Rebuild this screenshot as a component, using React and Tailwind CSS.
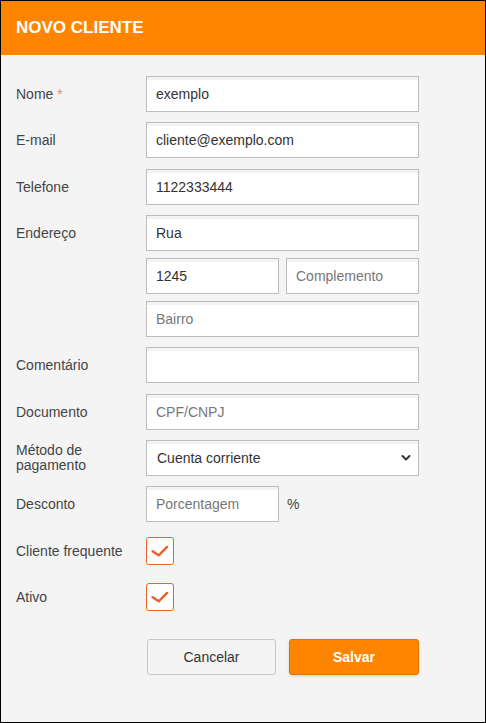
import React, { useState } from "react";

const inputBase =
  "h-[36px] border border-[#bdbdbd] bg-white px-[9px] text-[14px] text-[#333] placeholder:text-[#777] shadow-[inset_0_3px_0_#f3f3f3] outline-none";
const inputCls = `${inputBase} w-full min-w-0`;

const Row = ({ label, required, className = "", children }) => (
  <div className={`flex items-start ${className}`}>
    <div className="flex h-[36px] w-[130px] shrink-0 items-center text-[14px] leading-[15px] text-[#444]">
      <span>
        {label}
        {required && <span className="text-[#f08a4b]"> *</span>}
      </span>
    </div>
    <div className="w-[273px]">{children}</div>
  </div>
);

const Check = ({ checked, onChange }) => (
  <button
    type="button"
    onClick={onChange}
    className="flex h-[28px] w-[28px] items-center justify-center rounded-[3px] border border-[#e8622a] bg-white"
  >
    {checked && (
      <svg width="28" height="28" viewBox="0 0 28 28" fill="none">
        <path
          d="M6 14.2 L12.6 18.6 L21.6 9.6"
          stroke="#e8622a"
          strokeWidth="2.6"
          strokeLinecap="round"
          strokeLinejoin="round"
        />
      </svg>
    )}
  </button>
);

const App = () => {
  const [frequente, setFrequente] = useState(true);
  const [ativo, setAtivo] = useState(true);

  return (
    <div className="h-[723px] w-[486px] border border-black bg-[#f4f4f4] [font-family:'Liberation_Sans',Arial,sans-serif]">
      <div className="flex h-[54px] items-center bg-[#ff8400] px-[15px] text-[17px] font-bold text-white">
        NOVO CLIENTE
      </div>

      <form className="flex flex-col pl-[15px] pt-[21px]">
        <Row label="Nome" required>
          <input className={inputCls} defaultValue="exemplo" />
        </Row>
        <Row label="E-mail" className="mt-[10px]">
          <input className={inputCls} defaultValue="cliente@exemplo.com" />
        </Row>
        <Row label="Telefone" className="mt-[11px]">
          <input className={inputCls} defaultValue="1122333444" />
        </Row>
        <Row label="Endereço" className="mt-[10px]">
          <input className={inputCls} defaultValue="Rua" />
          <div className="mt-[7px] flex gap-[7px]">
            <input className={inputCls} defaultValue="1245" />
            <input className={inputCls} placeholder="Complemento" />
          </div>
          <input className={`${inputCls} mt-[7px]`} placeholder="Bairro" />
        </Row>
        <Row label="Comentário" className="mt-[10px]">
          <input className={inputCls} />
        </Row>
        <Row label="Documento" className="mt-[11px]">
          <input className={inputCls} placeholder="CPF/CNPJ" />
        </Row>
        <Row label={<>Método de<br />pagamento</>} className="mt-[10px]">
          <div className="relative">
            <select className={`${inputCls} appearance-none pl-[10px]`} defaultValue="cc">
              <option value="cc">Cuenta corriente</option>
              <option value="pix">Pix</option>
            </select>
            <svg
              className="pointer-events-none absolute right-[7px] top-[13px]"
              width="12"
              height="10"
              viewBox="0 0 12 10"
              fill="none"
            >
              <path d="M2.5 3 L6 6.5 L9.5 3" stroke="#333" strokeWidth="2" strokeLinecap="round" strokeLinejoin="round" />
            </svg>
          </div>
        </Row>
        <Row label="Desconto" className="mt-[10px]">
          <div className="flex items-center">
            <input className={`${inputBase} w-[133px]`} placeholder="Porcentagem" />
            <span className="ml-[8px] text-[14px] text-[#444]">%</span>
          </div>
        </Row>
        <div className="mt-[15px] flex">
          <div className="flex h-[28px] w-[130px] items-center text-[14px] text-[#444]">Cliente frequente</div>
          <Check checked={frequente} onChange={() => setFrequente(!frequente)} />
        </div>
        <div className="mt-[18px] flex">
          <div className="flex h-[28px] w-[130px] items-center text-[14px] text-[#444]">Ativo</div>
          <Check checked={ativo} onChange={() => setAtivo(!ativo)} />
        </div>
        <div className="ml-[131px] mt-[28px] flex gap-[13px]">
          <button
            type="button"
            className="h-[36px] w-[129px] rounded-[3px] border border-[#c8c8c8] bg-[#f4f4f4] text-[14px] text-[#333]"
          >
            Cancelar
          </button>
          <button
            type="submit"
            className="h-[36px] w-[130px] rounded-[3px] border border-[#e07400] bg-[#ff8400] text-[14px] font-bold text-white shadow-[0_1px_3px_rgba(0,0,0,0.15)]"
          >
            Salvar
          </button>
        </div>
      </form>
    </div>
  );
};

export default App;
